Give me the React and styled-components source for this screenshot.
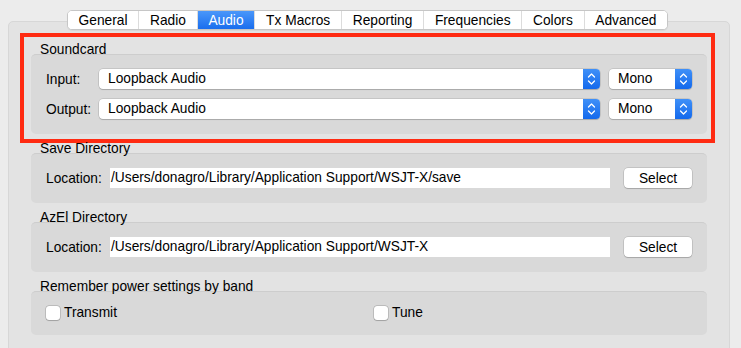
import styled, { createGlobalStyle } from 'styled-components';

const GlobalStyle = createGlobalStyle`
  html, body {
    margin: 0;
    padding: 0;
    background: #ececec;
    overflow: hidden;
  }
  body {
    font-family: "Liberation Sans", Arial, sans-serif;
    font-size: 13.75px;
    color: #000;
  }
`

const Window = styled.div`
  box-sizing: border-box;
  height: 348px;
  padding: 10px 11px 0 8px;
`

const TabBar = styled.div`
  display: flex;
  justify-content: center;
  position: relative;
  z-index: 1;
  padding-right: 3px;
`

const Tabs = styled.div`
  display: flex;
  background: #fff;
  border: 1px solid #c6c6c6;
  border-radius: 5px;
  overflow: hidden;
  box-shadow: 0 1px 1px rgba(0, 0, 0, 0.06);
`

const Tab = styled.div`
  height: 18px;
  line-height: 19px;
  padding: 0 10.75px;
  border-left: 1px solid #dcdcdc;
  color: ${p => (p.$active ? '#fff' : '#000')};
  background: ${p => (p.$active ? 'linear-gradient(#4a97fa, #1a6eee)' : '#fff')};
  &:first-child {
    border-left: none;
  }
`

const Pane = styled.div`
  margin-top: -9px;
  height: 340px;
  box-sizing: border-box;
  background: #e3e3e3;
  border: 1px solid #d7d7d7;
  border-radius: 5px;
  padding: 20px 22px 0 22px;
  display: flex;
  flex-direction: column;
  gap: 7px;
`

const Group = styled.section`
  position: relative;
`

const GroupTitle = styled.div`
  height: 12px;
  line-height: 16px;
  padding-left: 9px;
`

const GroupBox = styled.div`
  background: #d9d9d9;
  border-top: 1px solid #cdcdcd;
  border-radius: 5px;
  padding: 14px 15px 15px;
  display: ${p => (p.$grid ? 'grid' : 'flex')};
  grid-template-columns: 1fr 1fr;
  column-gap: 12px;
  flex-direction: column;
  gap: 10px;
`

const Highlight = styled.div`
  position: absolute;
  top: -9px;
  bottom: -9px;
  left: -11px;
  right: -8px;
  border: 4px solid #ff2b12;
  pointer-events: none;
`

const Row = styled.div`
  display: flex;
  align-items: center;
  height: 20px;
`

const Label = styled.span`
  width: ${p => p.$w}px;
  flex: none;
`

const Combo = styled.div`
  display: flex;
  height: 20px;
  width: ${p => (p.$w ? `${p.$w}px` : 'auto')};
  flex: ${p => (p.$w ? 'none' : '1')};
  margin-left: ${p => p.$ml || 0}px;
  background: #fff;
  border-radius: 4px;
  overflow: hidden;
  box-shadow: 0 0 0 0.5px rgba(0, 0, 0, 0.18), 0 1px 1px rgba(0, 0, 0, 0.15);
`

const ComboText = styled.span`
  flex: 1;
  padding-left: 9px;
  line-height: 20px;
  white-space: nowrap;
`

const Arrow = styled.span`
  width: 17px;
  flex: none;
  display: flex;
  align-items: center;
  justify-content: center;
  background: linear-gradient(#3f90f8, #1469ec);
`

const Field = styled.div`
  flex: 1;
  height: 20px;
  line-height: 20px;
  background: #fff;
  padding-left: 1px;
  white-space: nowrap;
  overflow: hidden;
`

const Button = styled.button`
  width: 68px;
  height: 20px;
  margin-left: 14px;
  padding: 0;
  font: inherit;
  color: #000;
  background: #fff;
  border: none;
  border-radius: 4px;
  box-shadow: 0 0 0 0.5px rgba(0, 0, 0, 0.2), 0 1px 1px rgba(0, 0, 0, 0.15);
`

const Check = styled.label`
  display: flex;
  align-items: center;
  gap: 4px;
  height: 14px;
  line-height: 14px;
`

const Box = styled.span`
  width: 14px;
  height: 14px;
  box-sizing: border-box;
  background: #fff;
  border-radius: 3px;
  box-shadow: 0 0 0 0.5px rgba(0, 0, 0, 0.25), 0 0.5px 1px rgba(0, 0, 0, 0.15);
`

const Chevrons = () => (
  <svg width="17" height="20" viewBox="0 0 17 20">
    <polyline points="5.5,8 8.5,5 11.5,8" fill="none" stroke="#fff" strokeWidth="1.3" strokeLinecap="round" strokeLinejoin="round" />
    <polyline points="5.5,12 8.5,15 11.5,12" fill="none" stroke="#fff" strokeWidth="1.3" strokeLinecap="round" strokeLinejoin="round" />
  </svg>
)

const tabs = ['General', 'Radio', 'Audio', 'Tx Macros', 'Reporting', 'Frequencies', 'Colors', 'Advanced']

const SoundRow = ({ label, device, channel }) => (
  <Row>
    <Label $w={53}>{label}</Label>
    <Combo>
      <ComboText>{device}</ComboText>
      <Arrow><Chevrons /></Arrow>
    </Combo>
    <Combo $w={83} $ml={9}>
      <ComboText>{channel}</ComboText>
      <Arrow><Chevrons /></Arrow>
    </Combo>
  </Row>
)

const PathGroup = ({ title, path }) => (
  <Group>
    <GroupTitle>{title}</GroupTitle>
    <GroupBox>
      <Row>
        <Label $w={64}>Location:</Label>
        <Field>{path}</Field>
        <Button>Select</Button>
      </Row>
    </GroupBox>
  </Group>
)

export default function App() {
  return (
    <Window>
      <GlobalStyle />
      <TabBar>
        <Tabs>
          {tabs.map(t => (
            <Tab key={t} $active={t === 'Audio'}>{t}</Tab>
          ))}
        </Tabs>
      </TabBar>
      <Pane>
        <Group>
          <GroupTitle>Soundcard</GroupTitle>
          <GroupBox>
            <SoundRow label="Input:" device="Loopback Audio" channel="Mono" />
            <SoundRow label="Output:" device="Loopback Audio" channel="Mono" />
          </GroupBox>
          <Highlight />
        </Group>
        <PathGroup title="Save Directory" path="/Users/donagro/Library/Application Support/WSJT-X/save" />
        <PathGroup title="AzEl Directory" path="/Users/donagro/Library/Application Support/WSJT-X" />
        <Group>
          <GroupTitle>Remember power settings by band</GroupTitle>
          <GroupBox $grid>
            <Check><Box />Transmit</Check>
            <Check><Box />Tune</Check>
          </GroupBox>
        </Group>
      </Pane>
    </Window>
  )
}
